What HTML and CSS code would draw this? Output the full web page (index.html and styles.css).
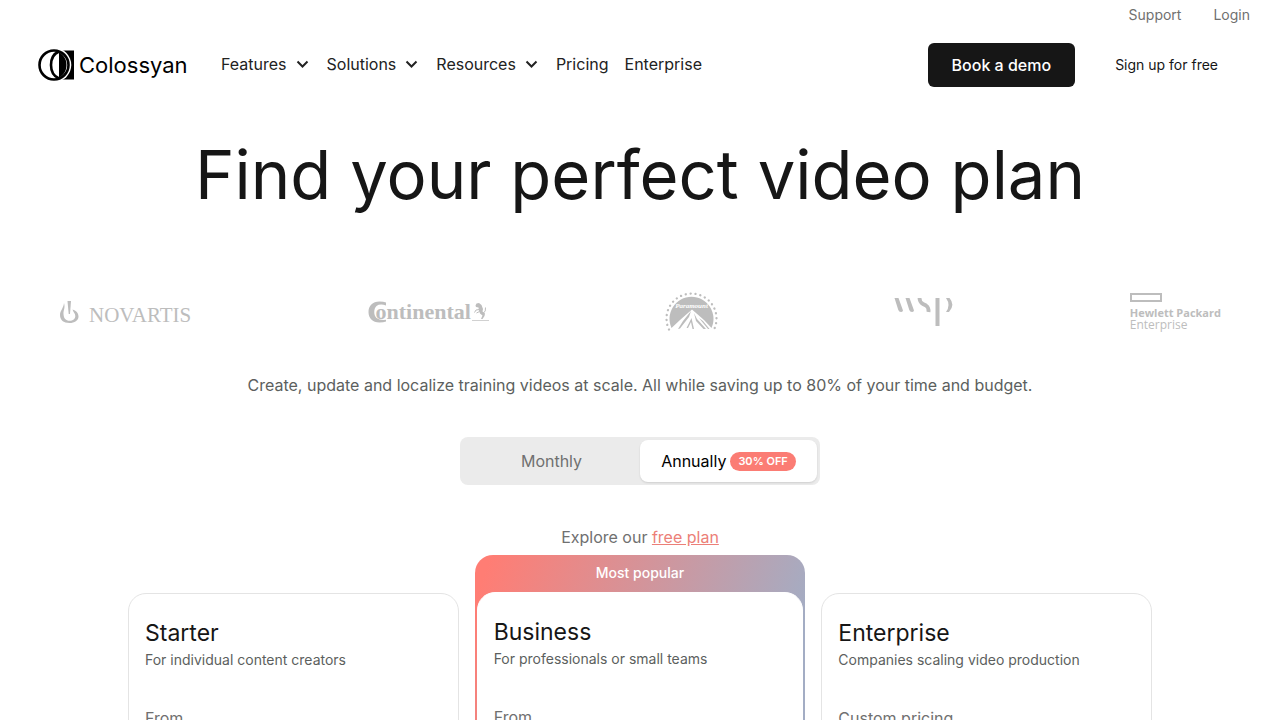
FILE: index.html
```html
<!DOCTYPE html>
<html lang="en">
<head>
<meta charset="utf-8">
<meta name="viewport" content="width=device-width, initial-scale=1">
<title>Colossyan Pricing</title>
<link rel="stylesheet" href="styles.css">
</head>
<body>
<header>
  <div class="topbar">
    <a href="#">Support</a>
    <a href="#">Login</a>
  </div>
  <div class="navbar">
    <a class="brand" href="#" aria-label="Colossyan">
      <svg class="brand-mark" viewBox="0 0 37 32" aria-hidden="true">
        <path d="M20 1.500H36V30.500H20Z" fill="#000"/>
        <circle cx="16" cy="16" r="17.300" fill="#fff"/>
        <circle cx="16" cy="16" r="14.500" fill="#fff" stroke="#000" stroke-width="2.600"/>
        <path d="M21 2.500C15 5 13 10 13 16S15 27 21 29.500" fill="none" stroke="#000" stroke-width="2.600"/>
        <path d="M21 3C25.500 6 28.500 10 28.500 16S25.500 26 21 29Z" fill="#000"/>
      </svg>
      <span>Colossyan</span>
    </a>
    <nav class="menu" aria-label="Main">
      <button type="button">Features <svg viewBox="0 0 16 8" aria-hidden="true"><path d="M2.500 1.500L7.500 6.500L12.500 1.500"/></svg></button>
      <button type="button">Solutions <svg viewBox="0 0 16 8" aria-hidden="true"><path d="M2.500 1.500L7.500 6.500L12.500 1.500"/></svg></button>
      <button type="button">Resources <svg viewBox="0 0 16 8" aria-hidden="true"><path d="M2.500 1.500L7.500 6.500L12.500 1.500"/></svg></button>
      <a href="#">Pricing</a>
      <a href="#">Enterprise</a>
    </nav>
    <div class="actions">
      <button class="demo" type="button">Book a demo</button>
      <a class="signup" href="#">Sign up for free</a>
    </div>
  </div>
</header>
<main>
  <h1>Find your perfect video plan</h1>
  <div class="logos">
    <div class="novartis">
      <svg viewBox="0 0 20 24" aria-hidden="true">
        <path d="M8.500 1H12L11 14H9.700Z"/>
        <path d="M5 3C6.500 8 4.300 10 4.500 14C4.700 18.500 7 20.800 10.500 20.800C14 20.800 16.300 18.800 16.300 16C16.300 13.500 14.500 12.500 13.500 9.500C17 10.500 19.500 13 19.500 16.500C19.500 20.500 15.500 23 10.500 23C4.500 23 1 20 1 15C1 10.500 4.500 8.500 5 3Z"/>
      </svg>
      <span>NOVARTIS</span>
    </div>
    <div class="continental">
      <svg class="conti-c" viewBox="0 0 20 22" aria-hidden="true">
        <path d="M18 4.500V1.500Q15.500 .5 11.500 .5C4.500 .5 .5 5 .5 11S4.500 21.500 11.500 21.500Q15.500 21.500 18 20.500V18.800Q12 19.500 8.500 17C5.500 14.500 5.500 7.500 8.500 5Q12 2.500 18 4.500Z"/>
      </svg>
      <span>ontinental</span>
      <svg class="horse" viewBox="0 0 18 20" aria-hidden="true">
        <path d="M5.500 1.500L8 1L10.500 3L12 7L11.500 9.500L14 11.500L13.500 14L11.500 17H10L11.500 13.500L9 11.500L8 9L7.500 5.500L5 5L4.500 3.500Z"/>
        <path d="M8.500 7.500L5 8L3.500 10.500M8.500 9.500L5.500 11M12.500 11Q15 9.500 14.500 5.500" fill="none" stroke="#bdbdbd"/>
        <path d="M1 18.500H18" stroke="#bdbdbd" stroke-width=".7"/>
      </svg>
    </div>
    <svg class="paramount" viewBox="0 0 53 42" role="img" aria-label="Paramount">
      <path d="M4 38.500A25 25 0 1 1 49 38.500" fill="none" stroke="#bdbdbd" stroke-width="2.300" stroke-linecap="round" stroke-dasharray="0.100 4.850"/>
      <path d="M6.500 37A22 22 0 1 1 46.500 37L39 29L27 18.500L15 29Z"/>
      <path d="M26 20L24 26L15 37.500L13 38L18 30ZM26.500 27L29 38H27.500L26 31L23 37H21.500ZM29 22L32 28L41 38H38.500L31 30ZM34 27L38 30L44.500 38H43Z"/>
      <text x="26.500" y="17" text-anchor="middle">Paramount</text>
    </svg>
    <svg class="wsp" viewBox="0 0 59 30" role="img" aria-label="WSP">
      <path d="M.5 1H4.500L9 13.500Q8.500 15 7 15Q5 15 4.300 13ZM11.500 1H15.500L20 13.500Q19.500 15 18 15Q16 15 15.300 13ZM41.500 1H45.500V29H41.500ZM52 1H55.500Q61.500 8 55 15H52Q57 8 52 1Z"/>
      <path d="M25.500 1Q25.500 5 29 7L32 8.500Q35 10.500 34.500 15" fill="none" stroke="#bdbdbd" stroke-width="3.800"/>
    </svg>
    <div class="hpe">
      <svg viewBox="0 0 32 9" aria-hidden="true"><path d="M1 1H31V8H1Z" fill="none" stroke="#bdbdbd" stroke-width="2"/></svg>
      <strong>Hewlett Packard</strong>
      <span>Enterprise</span>
    </div>
  </div>
  <p class="lead">Create, update and localize training videos at scale. All while saving up to 80% of your time and budget.</p>
  <div class="toggle" role="radiogroup" aria-label="Billing period">
    <input type="radio" name="billing" id="monthly">
    <label for="monthly">Monthly</label>
    <input type="radio" name="billing" id="annually" checked>
    <label for="annually">Annually <span class="badge">30% OFF</span></label>
  </div>
  <p class="explore">Explore our <a href="#">free plan</a></p>
  <div class="plans">
    <section class="card">
      <h2>Starter</h2>
      <p class="desc">For individual content creators</p>
      <p class="price">From</p>
    </section>
    <div class="popular">
      <p class="ribbon">Most popular</p>
      <section class="card">
        <h2>Business</h2>
        <p class="desc">For professionals or small teams</p>
        <p class="price">From</p>
      </section>
    </div>
    <section class="card">
      <h2>Enterprise</h2>
      <p class="desc">Companies scaling video production</p>
      <p class="price">Custom pricing</p>
    </section>
  </div>
</main>
</body>
</html>
```
FILE: styles.css
```css
* { box-sizing: border-box; }
body { margin: 0; background: #fff; color: #161616; font: 16px/24px Inter, sans-serif; }
h1, h2, p { margin: 0; font-weight: 400; }
a { color: inherit; text-decoration: none; }
button { font: inherit; color: inherit; background: none; border: 0; padding: 0; cursor: pointer; }
.topbar { display: flex; justify-content: flex-end; gap: 32px; height: 30px; padding: 0 30px; font-size: 14px; line-height: 30px; color: #707070; }
.navbar { display: flex; align-items: center; height: 70px; padding: 0 38px; }
.brand { display: flex; align-items: center; gap: 4px; width: 183px; font-size: 22px; font-weight: 400; color: #000; }
.brand-mark { width: 37px; height: 32px; }
.menu { display: flex; align-items: center; gap: 16px; padding-bottom: 2px; color: #222; }
.menu button { display: flex; align-items: center; gap: 8px; }
.menu svg { width: 16px; height: 8px; fill: none; stroke: #222; stroke-width: 2; }
.actions { display: flex; align-items: center; gap: 40px; margin-left: auto; padding-right: 24px; }
.demo { height: 44px; padding: 0 24px; border-radius: 6px; background: #161616; color: #fff; font-weight: 500; }
.signup { font-size: 14px; }
h1 { padding-top: 30px; font-size: 67px; line-height: 90px; text-align: center; font-weight: 400; }
.logos { display: flex; justify-content: space-between; align-items: center; height: 48px; margin-top: 68px; padding: 0 59px; color: #bdbdbd; fill: #bdbdbd; }
.novartis { display: flex; align-items: center; gap: 10px; font: 21px/24px "Liberation Serif", serif; }
.novartis span { padding-top: 6px; }
.novartis svg { width: 20px; height: 24px; }
.continental { display: flex; align-items: center; font: bold 22px/24px "Liberation Serif", serif; }
.conti-c { width: 20px; height: 22px; margin-right: -12px; }
.horse { width: 18px; height: 20px; }
.paramount { width: 53px; height: 42px; }
.paramount text { font: italic bold 7px "Liberation Serif", serif; fill: #fff; }
.wsp { width: 59px; height: 30px; }
.hpe { display: flex; flex-direction: column; font: 12px/12px "Open Sans", sans-serif; }
.hpe strong { font-size: 11px; line-height: 12px; }
.hpe svg { width: 32px; height: 9px; margin-bottom: 5px; }
.lead { margin-top: 37px; text-align: center; color: #5c5f5e; }
.toggle { display: flex; width: 360px; height: 48px; margin: 40px auto 0; padding: 3px; border-radius: 8px; background: #ebebeb; color: #707070; }
.toggle input { position: absolute; opacity: 0; }
.toggle label { display: flex; flex: 1; align-items: center; justify-content: center; gap: 4px; border-radius: 8px; cursor: pointer; }
.toggle input:checked + label { background: #fff; color: #000; box-shadow: 0 1px 2px #0000001f; }
.badge { padding: 0 8px; border-radius: 10px; background: #fb7c74; color: #fff; font-size: 11px; line-height: 19px; font-weight: 600; }
.explore { margin-top: 40px; text-align: center; color: #707070; }
.explore a { color: #ec7f78; text-decoration: underline; }
.plans { display: grid; grid-template-columns: repeat(3, 1fr); gap: 16px; max-width: 1024px; margin: 6px auto 0; align-items: end; }
.card { padding: 24px 16px; border: 1px solid #e4e4e4; border-radius: 18px; background: #fff; }
.card h2 { font-size: 23px; line-height: 30px; }
.desc { font-size: 14px; line-height: 24px; color: #5c5f5e; }
.price { margin-top: 34px; font-size: 16px; color: #707070; }
.popular { padding: 0 2px 1px; border-radius: 18px; background: linear-gradient(110deg, #ff7d74 4%, #a3adc4 88%); }
.popular .card { border-color: #fff; }
.ribbon { padding-bottom: 2px; color: #fff; font-size: 14px; font-weight: 500; line-height: 35px; text-align: center; }
```
